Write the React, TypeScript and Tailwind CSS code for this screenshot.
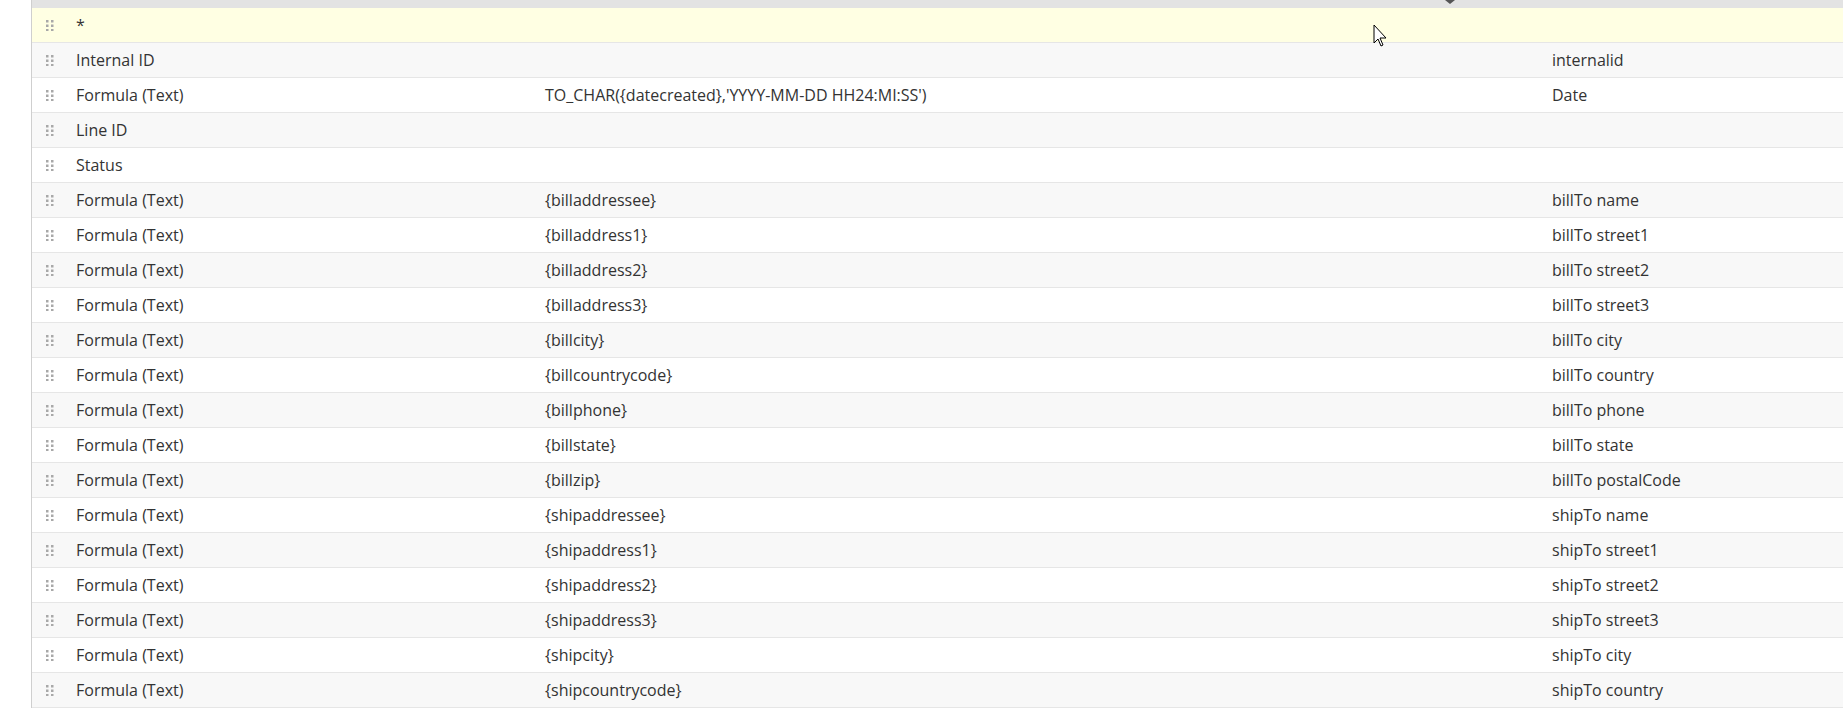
import React from "react";

const rows: [string, string, string][] = [
  ["*", "", ""],
  ["Internal ID", "", "internalid"],
  ["Formula (Text)", "TO_CHAR({datecreated},'YYYY-MM-DD HH24:MI:SS')", "Date"],
  ["Line ID", "", ""],
  ["Status", "", ""],
  ["Formula (Text)", "{billaddressee}", "billTo name"],
  ["Formula (Text)", "{billaddress1}", "billTo street1"],
  ["Formula (Text)", "{billaddress2}", "billTo street2"],
  ["Formula (Text)", "{billaddress3}", "billTo street3"],
  ["Formula (Text)", "{billcity}", "billTo city"],
  ["Formula (Text)", "{billcountrycode}", "billTo country"],
  ["Formula (Text)", "{billphone}", "billTo phone"],
  ["Formula (Text)", "{billstate}", "billTo state"],
  ["Formula (Text)", "{billzip}", "billTo postalCode"],
  ["Formula (Text)", "{shipaddressee}", "shipTo name"],
  ["Formula (Text)", "{shipaddress1}", "shipTo street1"],
  ["Formula (Text)", "{shipaddress2}", "shipTo street2"],
  ["Formula (Text)", "{shipaddress3}", "shipTo street3"],
  ["Formula (Text)", "{shipcity}", "shipTo city"],
  ["Formula (Text)", "{shipcountrycode}", "shipTo country"],
];

function Handle() {
  return (
    <svg width="8" height="12" viewBox="0 0 8 12" className="shrink-0">
      {[0, 1, 2].map((r) =>
        [0, 1].map((c) => (
          <rect key={`${r}-${c}`} x={c * 5} y={r * 4.5 + 1} width="2.5" height="2.5" fill="#a8a8a8" />
        ))
      )}
    </svg>
  );
}

export default function App() {
  return (
    <div
      className="relative w-[1843px] h-[709px] bg-white overflow-hidden text-[16px] text-[#333]"
      style={{ fontFamily: '"Open Sans", "Liberation Sans", sans-serif' }}
    >
      <div className="ml-[31px] border-l border-[#cfcfcf]">
        <div className="h-[8px] bg-[#e3e3e3]" />
        {rows.map((r, i) => (
          <div
            key={i}
            className={`flex items-center h-[35px] border-b border-[#e6e6e6] ${
              i === 0 ? "bg-[#ffffe3]" : i % 2 === 1 ? "bg-[#f8f8f8]" : "bg-white"
            }`}
          >
            <div className="w-[44px] pl-[14px] flex items-center">
              <Handle />
            </div>
            <div className="w-[469px]">{r[0]}</div>
            <div className="w-[1007px]">{r[1]}</div>
            <div>{r[2]}</div>
          </div>
        ))}
      </div>
      <div className="absolute left-[1445px] top-0 w-0 h-0 border-l-[5px] border-r-[5px] border-t-[4px] border-l-transparent border-r-transparent border-t-[#555]" />
      <svg className="absolute left-[1373px] top-[24px]" width="16" height="24" viewBox="0 0 16 24">
        <path d="M1 1 L1 19 L5 15 L8 22 L10 21 L7 14 L13 14 Z" fill="white" stroke="black" strokeWidth="1" />
      </svg>
    </div>
  );
}
